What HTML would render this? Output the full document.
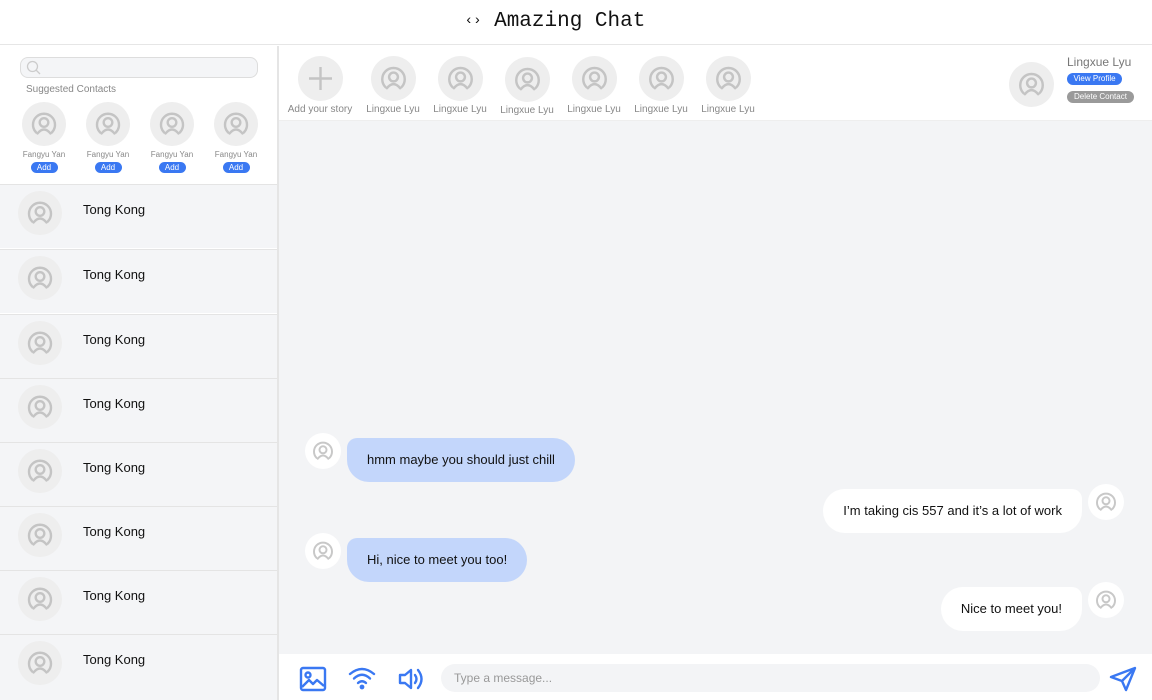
<!DOCTYPE html>
<html><head><meta charset="utf-8"><style>
*{box-sizing:border-box;margin:0;padding:0}
body{width:1152px;height:700px;overflow:hidden;background:#fff;font-family:"Liberation Sans",Roboto,sans-serif;position:relative}
.abs{position:absolute}
.title{left:0;top:0;width:1152px;height:45px;border-bottom:1px solid #e6e6e6;text-align:center;font-family:"Liberation Mono",monospace;font-size:21px;line-height:42px;color:#111;padding-right:42px}
.left{left:0;top:46px;width:279px;height:654px;border-right:2px solid #e5e5e5}
.av{display:block}
.sug{position:absolute;width:50px;text-align:center;font-size:8px;color:#888}
.add{display:inline-block;background:#3a78f2;color:#fff;border-radius:6px;width:27px;height:11px;line-height:11px;font-size:8px;margin-top:3px}
.item{position:absolute;left:0;width:277px;height:64px;background:#f4f5f7;border-top:1px solid #e4e4e4}
.item svg{position:absolute;left:18px;top:6px}
.item span{position:absolute;left:83px;top:17px;font-size:13px;color:#111}
.story{position:absolute;top:56px;width:70px;text-align:center;font-size:10px;color:#888}
.story svg{margin:0 auto 3px}
.chat{left:279px;top:120px;width:873px;height:534px;background:#f3f4f6;border-top:1px solid #eee}
.bub{position:absolute;height:44px;line-height:44px;font-size:13px;color:#111;padding:0 20px;border-radius:22px}
.l{background:#c3d6fb;border-top-left-radius:10px}
.r{background:#fff;border-top-right-radius:10px}
.sm{position:absolute}
</style></head><body>
<svg width="0" height="0" style="position:absolute"><defs>
<symbol id="a" viewBox="0 0 44 44"><circle cx="22" cy="22" r="22" fill="#eeeeee"/><g fill="none" stroke="#c4c4c4" stroke-width="2.4" stroke-linecap="round"><path d="M14.2 30.5 A11 11 0 1 1 29.8 30.5"/><circle cx="22" cy="20.5" r="4.3"/><path d="M15.5 31.5 Q22 23.5 28.5 31.5"/></g></symbol>
<symbol id="w" viewBox="0 0 44 44"><circle cx="22" cy="22" r="22" fill="#ffffff"/><g fill="none" stroke="#c8c8c8" stroke-width="2.4" stroke-linecap="round"><path d="M14.2 30.5 A11 11 0 1 1 29.8 30.5"/><circle cx="22" cy="20.5" r="4.3"/><path d="M15.5 31.5 Q22 23.5 28.5 31.5"/></g></symbol>
</defs></svg>

<div class="abs title"><span style="font-size:14px;vertical-align:2px">‹›</span> Amazing Chat</div>

<div class="abs left">
  <div class="abs" style="left:20px;top:11px;width:238px;height:21px;border:1px solid #ddd;border-radius:8px;background:#f4f5f7"></div>
  <svg class="abs" style="left:26px;top:14px" width="16" height="16" viewBox="0 0 16 16"><circle cx="6.5" cy="6.5" r="5" fill="none" stroke="#ccc" stroke-width="1.3"/><path d="M10 10 L14 14" stroke="#ccc" stroke-width="1.3"/></svg>
  <div class="abs" style="left:26px;top:38px;font-size:10px;color:#888">Suggested Contacts</div>
  <div class="sug" style="left:19px;top:56px"><svg class="av" width="44" height="44" style="margin:0 auto"><use href="#a"/></svg><div style="margin-top:4px">Fangyu Yan</div><span class="add">Add</span></div>
  <div class="sug" style="left:83px;top:56px"><svg class="av" width="44" height="44" style="margin:0 auto"><use href="#a"/></svg><div style="margin-top:4px">Fangyu Yan</div><span class="add">Add</span></div>
  <div class="sug" style="left:147px;top:56px"><svg class="av" width="44" height="44" style="margin:0 auto"><use href="#a"/></svg><div style="margin-top:4px">Fangyu Yan</div><span class="add">Add</span></div>
  <div class="sug" style="left:211px;top:56px"><svg class="av" width="44" height="44" style="margin:0 auto"><use href="#a"/></svg><div style="margin-top:4px">Fangyu Yan</div><span class="add">Add</span></div>
</div>
<div class="item" style="top:184px"><svg width="44" height="44"><use href="#a"/></svg><span>Tong Kong</span></div>
<div class="item" style="top:249px"><svg width="44" height="44"><use href="#a"/></svg><span>Tong Kong</span></div>
<div class="item" style="top:314px"><svg width="44" height="44"><use href="#a"/></svg><span>Tong Kong</span></div>
<div class="item" style="top:378px"><svg width="44" height="44"><use href="#a"/></svg><span>Tong Kong</span></div>
<div class="item" style="top:442px"><svg width="44" height="44"><use href="#a"/></svg><span>Tong Kong</span></div>
<div class="item" style="top:506px"><svg width="44" height="44"><use href="#a"/></svg><span>Tong Kong</span></div>
<div class="item" style="top:570px"><svg width="44" height="44"><use href="#a"/></svg><span>Tong Kong</span></div>
<div class="item" style="top:634px;height:66px"><svg width="44" height="44"><use href="#a"/></svg><span>Tong Kong</span></div>

<div class="story" style="left:285px"><svg class="av" width="45" height="45"><circle cx="22.5" cy="22.5" r="22.5" fill="#eee"/><path d="M22.5 11V34M11 22.5H34" stroke="#c4c4c4" stroke-width="2.4"/></svg>Add your story</div>
<div class="story" style="left:358px"><svg class="av" width="45" height="45"><use href="#a"/></svg>Lingxue Lyu</div>
<div class="story" style="left:425px"><svg class="av" width="45" height="45"><use href="#a"/></svg>Lingxue Lyu</div>
<div class="story" style="left:492px;top:57px"><svg class="av" width="45" height="45"><use href="#a"/></svg>Lingxue Lyu</div>
<div class="story" style="left:559px"><svg class="av" width="45" height="45"><use href="#a"/></svg>Lingxue Lyu</div>
<div class="story" style="left:626px"><svg class="av" width="45" height="45"><use href="#a"/></svg>Lingxue Lyu</div>
<div class="story" style="left:693px"><svg class="av" width="45" height="45"><use href="#a"/></svg>Lingxue Lyu</div>
<svg class="abs" style="left:1009px;top:62px" width="45" height="45"><use href="#a"/></svg>
<div class="abs" style="left:1067px;top:55px;font-size:12px;color:#777">Lingxue Lyu</div>
<div class="abs" style="left:1067px;top:73px;width:55px;height:12px;border-radius:6px;background:#3a78f2;color:#fff;font-size:8px;line-height:12px;text-align:center">View Profile</div>
<div class="abs" style="left:1067px;top:91px;width:67px;height:12px;border-radius:6px;background:#9a9a9a;color:#fff;font-size:8px;line-height:12px;text-align:center">Delete Contact</div>

<div class="abs chat">
  <svg class="sm" style="left:26px;top:312px" width="36" height="36"><use href="#w"/></svg>
  <div class="bub l" style="left:68px;top:317px">hmm maybe you should just chill</div>
  <div class="bub r" style="right:70px;top:368px">I’m taking cis 557 and it’s a lot of work</div>
  <svg class="sm" style="left:809px;top:363px" width="36" height="36"><use href="#w"/></svg>
  <svg class="sm" style="left:26px;top:412px" width="36" height="36"><use href="#w"/></svg>
  <div class="bub l" style="left:68px;top:417px">Hi, nice to meet you too!</div>
  <div class="bub r" style="right:70px;top:466px">Nice to meet you!</div>
  <svg class="sm" style="left:809px;top:461px" width="36" height="36"><use href="#w"/></svg>
</div>

<svg class="abs" style="left:299px;top:665px" width="28" height="28" viewBox="0 0 28 28" fill="none" stroke="#3a78f2" stroke-width="2.4" stroke-linejoin="round"><rect x="2" y="3" width="24" height="22" rx="2"/><circle cx="9" cy="10" r="2.5"/><path d="M3 22 L10 15 L14 19 L18 15 L25 21"/></svg>
<svg class="abs" style="left:348px;top:666px" width="28" height="24" viewBox="0 0 28 24" fill="none" stroke="#3a78f2" stroke-width="2.4" stroke-linecap="round"><path d="M2 8 Q14 -2 26 8"/><path d="M6 12.5 Q14 5 22 12.5"/><path d="M10 17 Q14 13.5 18 17"/><circle cx="14" cy="21" r="1.2" fill="#3a78f2"/></svg>
<svg class="abs" style="left:397px;top:665px" width="30" height="28" viewBox="0 0 30 28" fill="none" stroke="#3a78f2" stroke-width="2.4" stroke-linejoin="round" stroke-linecap="round"><path d="M3 10 H8 L14 5 V23 L8 18 H3 Z"/><path d="M18 10 Q21 14 18 18"/><path d="M21 5 Q28 14 21 23"/></svg>
<div class="abs" style="left:441px;top:664px;width:659px;height:28px;border-radius:14px;background:#f3f4f6;font-size:12px;color:#999;line-height:28px;padding-left:13px">Type a message...</div>
<svg class="abs" style="left:1109px;top:666px" width="28" height="26" viewBox="0 0 28 26" fill="none" stroke="#3a78f2" stroke-width="2.4" stroke-linejoin="round"><path d="M2 11 L26 2 L17 24 L13 15 Z M13 15 L26 2"/></svg>
</body></html>
